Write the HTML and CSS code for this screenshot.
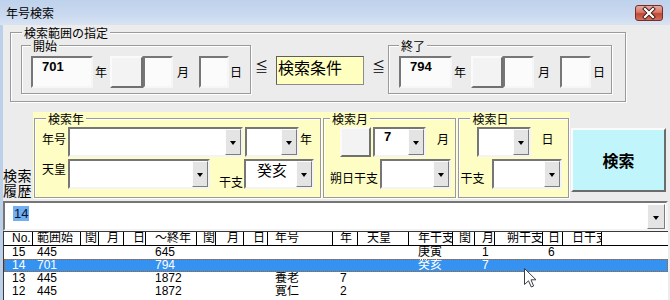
FILE: index.html
```html
<!DOCTYPE html>
<html lang="ja">
<head>
<meta charset="utf-8">
<title>年号検索</title>
<link rel="stylesheet" href="styles.css">
</head>
<body>
<div class="window">
  <div class="titlebar">
    <span class="title">年号検索</span>
    <span class="close"><svg width="28" height="16" viewBox="0 0 28 16"><path d="M10 4 L18 12 M18 4 L10 12" stroke="#3a1a16" stroke-width="4" stroke-linecap="square"/><path d="M10 4 L18 12 M18 4 L10 12" stroke="#fff" stroke-width="2.2" stroke-linecap="square"/></svg></span>
  </div>
  <div class="client">
    <fieldset class="grp range">
      <legend>検索範囲の指定</legend>
      <div class="range-row">
        <fieldset class="grp sub g-start">
          <legend>開始</legend>
          <div class="ctl-row">
            <div class="box sunken yr w62">701</div><span class="lbl l-nen">年</span>
            <div class="box raised w33"></div><div class="box sunken w30"></div><span class="lbl l-tsuki">月</span>
            <div class="box sunken w30"></div><span class="lbl l-hi">日</span>
          </div>
        </fieldset>
        <span class="le le1">≦</span>
        <div class="cond">検索条件</div>
        <span class="le le2">≦</span>
        <fieldset class="grp sub g-end">
          <legend>終了</legend>
          <div class="ctl-row">
            <div class="box sunken yr w53">794</div><span class="lbl l-nen2">年</span>
            <div class="box raised w32"></div><div class="box sunken w31"></div><span class="lbl l-tsuki2">月</span>
            <div class="box sunken w31"></div><span class="lbl l-hi2">日</span>
          </div>
        </fieldset>
      </div>
    </fieldset>

    <div class="search-row">
      <div class="hist-label"><span>検索</span><span>履歴</span></div>
      <div class="yellow">
        <fieldset class="grp ygrp g-year">
          <legend>検索年</legend>
          <div class="frow">
            <span class="lbl flbl">年号</span>
            <div class="combo w175"><span class="cv"></span><span class="dd"></span></div>
            <div class="combo w54 ml2"><span class="cv"></span><span class="dd"></span></div>
            <span class="lbl flbl2">年</span>
          </div>
          <div class="frow r2">
            <span class="lbl flbl fl-tenno">天皇</span>
            <div class="combo w142"><span class="cv"></span><span class="dd"></span></div>
            <span class="lbl lbl-end l-eto">干支</span>
            <div class="combo w70"><span class="cv big">癸亥</span><span class="dd"></span></div>
          </div>
        </fieldset>
        <fieldset class="grp ygrp g-month">
          <legend>検索月</legend>
          <div class="frow">
            <div class="box raised w31 h30 ml10"></div>
            <div class="combo w53 ml2"><span class="cv bold">7</span><span class="dd"></span></div>
            <span class="lbl l-m">月</span>
          </div>
          <div class="frow r2">
            <span class="lbl lbl-end l-saku">朔日干支</span>
            <div class="combo w71"><span class="cv"></span><span class="dd"></span></div>
          </div>
        </fieldset>
        <fieldset class="grp ygrp g-day">
          <legend>検索日</legend>
          <div class="frow">
            <div class="combo w54 ml17"><span class="cv"></span><span class="dd"></span></div>
            <span class="lbl l-d">日</span>
          </div>
          <div class="frow r2">
            <span class="lbl lbl-end l-deto">干支</span>
            <div class="combo w70"><span class="cv"></span><span class="dd"></span></div>
          </div>
        </fieldset>
      </div>
      <button class="search-btn">検索</button>
    </div>

    <div class="combo hist"><span class="cv hv"><span class="sel">14</span></span><span class="dd dd-h"></span></div>

    <div class="list">
      <div class="lv-row lv-head">
        <span>No.</span><span>範囲始</span><span>閏</span><span>月</span><span>日</span><span>～終年</span><span>閏</span><span>月</span><span>日</span><span>年号</span><span>年</span><span>天皇</span><span>年干支</span><span>閏</span><span>月</span><span>朔干支</span><span>日</span><span>日干支</span><span class="last"></span>
      </div>
      <div class="lv-row">
        <span>15</span><span>445</span><span></span><span></span><span></span><span>645</span><span></span><span></span><span></span><span></span><span></span><span></span><span>庚寅</span><span></span><span>1</span><span></span><span>6</span><span></span><span></span>
      </div>
      <div class="lv-row selected">
        <span>14</span><span>701</span><span></span><span></span><span></span><span>794</span><span></span><span></span><span></span><span></span><span></span><span></span><span>癸亥</span><span></span><span>7</span><span></span><span></span><span></span><span></span>
      </div>
      <div class="lv-row">
        <span>13</span><span>445</span><span></span><span></span><span></span><span>1872</span><span></span><span></span><span></span><span>養老</span><span>7</span><span></span><span></span><span></span><span></span><span></span><span></span><span></span><span></span>
      </div>
      <div class="lv-row">
        <span>12</span><span>445</span><span></span><span></span><span></span><span>1872</span><span></span><span></span><span></span><span>寛仁</span><span>2</span><span></span><span></span><span></span><span></span><span></span><span></span><span></span><span></span>
      </div>
    </div>
  </div>
  <svg class="cursor" width="13" height="20" viewBox="0 0 13 20"><path d="M0.5 0.5 L0.5 16.5 L4.5 12.8 L7.3 19 L9.6 18 L7 11.8 L12 11.8 Z" fill="#fff" stroke="#3c3c46" stroke-width="1" stroke-linejoin="round"/></svg>
</div>
</body>
</html>
```

FILE: styles.css
```css
* { box-sizing: border-box; }

body {
  margin: 0;
  width: 670px;
  height: 300px;
  overflow: hidden;
  font-family: "Liberation Sans", "Noto Sans CJK JP", sans-serif;
  font-size: 12px;
  color: #000;
  background: #c5d6ee;
}

.window {
  position: relative;
  width: 670px;
  height: 300px;
  display: flex;
  flex-direction: column;
  background: #bdd0ea;
}

.titlebar {
  height: 25px;
  flex: none;
  display: flex;
  align-items: flex-start;
  background: linear-gradient(#bfd2ec, #c9d9ef 60%, #d9e4f3);
}

.title {
  padding: 6px 0 0 6px;
  line-height: 14px;
  font-family: "Noto Sans CJK JP", sans-serif;
  font-size: 12px;
}

.close {
  margin: 5px 7px 0 auto;
  width: 28px;
  height: 16px;
  border: 1px solid #7a2c24;
  border-radius: 3px;
  background: linear-gradient(#e7aa9f, #d67869 45%, #c04734 55%, #d0705c);
  display: flex;
  align-items: center;
  justify-content: center;
  overflow: hidden;
}
.close svg { display: block; margin: -1px; }

.client {
  flex: 1;
  margin-left: 3px;
  background: #ececec;
  display: flex;
  flex-direction: column;
  overflow: hidden;
}

/* group boxes */
.grp {
  margin: 0;
  min-width: 0;
  border: 1px solid #9a9a9a;
  box-shadow: inset 1px 1px 0 #fff, 1px 1px 0 #fff;
}
.grp > legend {
  padding: 0 2px;
  font-size: 12px;
  line-height: 13px;
  font-family: "Noto Sans CJK JP", sans-serif;
  background: #ececec;
}

.range {
  margin: 1px 0 0 7px;
  width: 616px;
  padding: 0 0 7px 10px;
}
.range > legend { margin-left: 1px; }

.range-row {
  display: flex;
  align-items: flex-start;
}

.sub { padding: 4px 0 5px 9px; }
.g-start { width: 230px; }
.g-end { width: 224px; margin-left: 3px; padding-left: 10px; }

.ctl-row {
  display: flex;
  align-items: center;
}

.lbl {
  font-family: "Noto Sans CJK JP", sans-serif;
  font-size: 12px;
  line-height: 14px;
  white-space: nowrap;
}

/* 3D boxes */
.box { height: 32px; }
.sunken {
  border: 2px solid;
  border-color: #767676 #f6f6f6 #f6f6f6 #767676;
  background: #fbfbfb;
}
.raised {
  border: 2px solid;
  border-color: #fafafa #707070 #707070 #fafafa;
  background: #f3f3f3;
}
.yr {
  font-weight: bold;
  font-size: 13px;
  line-height: 15px;
  padding: 1px 0 0 9px;
}
.w62 { width: 62px; }
.w53 { width: 53px; }
.w33 { width: 33px; }
.w32 { width: 32px; }
.w31 { width: 31px; }
.w30 { width: 30px; }
.h30 { height: 30px; }

.l-nen { margin: 0 3px 0 2px; }
.l-tsuki { margin: 0 10px 0 4px; }
.l-hi { margin-left: 1px; }
.l-nen2 { margin: 0 5px 0 2px; }
.l-tsuki2 { margin: 0 10px 0 4px; }
.l-hi2 { margin-left: 2px; }

.le {
  width: 13px;
  font-family: "Noto Sans CJK JP", sans-serif;
  font-size: 13px;
  line-height: 14px;
  margin-top: 20px;
}
.le1 { margin-left: 4px; }
.le2 { margin-left: 8px; }

.cond {
  margin: 17px 0 0 8px;
  width: 88px;
  height: 29px;
  border: 1px solid;
  border-color: #5e5e5e #8c8c8c #8c8c8c #5e5e5e;
  background: #ffffc0;
  font-family: "Noto Sans CJK JP", sans-serif;
  font-size: 16px;
  line-height: 18px;
  padding: 1px 0 0 1px;
}

/* second row */
.search-row {
  display: flex;
  margin-top: 10px;
  height: 87px;
  flex: none;
}

.hist-label {
  width: 30px;
  align-self: flex-end;
  margin-bottom: 1px;
  display: flex;
  flex-direction: column;
  font-family: "Noto Sans CJK JP", sans-serif;
  font-size: 14px;
  line-height: 15px;
  letter-spacing: 0.5px;
}

.yellow {
  width: 537px;
  display: flex;
  gap: 2px;
  padding: 0 1px 1px 1px;
  background: #fdfdc4;
}

.ygrp > legend { background: #fdfdc4; }
.ygrp { padding: 2px 0 0 0; }

.g-year { width: 288px; padding-left: 7px; }
.g-year > legend { margin-left: 4px; }
.g-month { width: 134px; padding-left: 6px; }
.g-day { width: 111px; padding-left: 1px; }
.g-day > legend { margin-left: 10px; }

.frow {
  display: flex;
  align-items: flex-start;
}
.frow.r2 { margin-top: 2px; }

.flbl { width: 26px; padding-top: 5px; }
.fl-tenno { padding-top: 3px; }
.flbl2 { margin-left: 1px; padding-top: 5px; }
.lbl-end { align-self: flex-end; margin-bottom: 0; }
.l-eto { margin-left: 9px; width: 25px; }
.l-m { margin-left: 11px; padding-top: 5px; }
.l-saku { width: 50px; margin-bottom: 4px; }
.l-d { margin-left: 10px; padding-top: 5px; }
.l-deto { width: 32px; margin-bottom: 4px; }

.ml2 { margin-left: 2px; }
.ml10 { margin-left: 10px; }
.ml17 { margin-left: 17px; }

/* combo boxes */
.combo {
  display: flex;
  height: 30px;
  border: 2px solid;
  border-color: #767676 #f4f4f4 #f4f4f4 #767676;
  background: #fff;
}
.w175 { width: 175px; }
.w142 { width: 142px; }
.w71 { width: 71px; }
.w70 { width: 70px; }
.w54 { width: 54px; }
.w53 { width: 53px; }

.cv {
  flex: 1;
  min-width: 0;
  padding-left: 9px;
  line-height: 15px;
  white-space: nowrap;
}
.cv.bold { font-weight: bold; font-size: 13px; }
.cv.big {
  font-family: "Noto Sans CJK JP", sans-serif;
  font-size: 15px;
  line-height: 17px;
  padding-left: 11px;
}

.dd {
  width: 16px;
  flex: none;
  background: #e4e4e4;
  border: 1px solid;
  border-color: #fdfdfd #7c7c7c #7c7c7c #fdfdfd;
  display: flex;
  align-items: center;
  justify-content: center;
}
.dd::after {
  content: "";
  margin-top: 2px;
  border-left: 3.5px solid transparent;
  border-right: 3.5px solid transparent;
  border-top: 4px solid #000;
}

.search-btn {
  margin: 16px 0 0 1px;
  width: 95px;
  height: 64px;
  padding: 0;
  border: 2px solid;
  border-color: #fbfbfb #6c6c6c #6c6c6c #fbfbfb;
  background: #c0f6fb;
  font-family: "Noto Sans CJK JP", sans-serif;
  font-size: 16px;
  font-weight: bold;
  color: #000;
}

/* history combo */
.combo.hist {
  margin-top: 2px;
  width: 665px;
  height: 30px;
  flex: none;
}
.hv { padding: 3px 0 0 8px; font-size: 13px; }
.sel {
  background: #73aef0;
  color: #00163a;
  padding: 0 1px;
}
.dd-h { width: 18px; margin: 1px 1px 0 0; }

/* list */
.list {
  width: 665px;
  flex: 1;
  background: #fff;
  border-top: 1px solid #3a3a3a;
  border-left: 1px solid #3a3a3a;
  overflow: hidden;
}

.lv-row {
  display: grid;
  grid-template-columns: 29px 48px 18px 25px 22px 51px 19px 28px 24px 65px 25px 51px 44px 22px 20px 48px 20px 39px 1fr;
  height: 13px;
  line-height: 13px;
  font-size: 12px;
}
.lv-row > span {
  overflow: hidden;
  white-space: nowrap;
}
.lv-row > :nth-child(1) { padding-left: 8px; }
.lv-row > :nth-child(2) { padding-left: 4px; }
.lv-row > :nth-child(3) { padding-left: 4px; }
.lv-row > :nth-child(4) { padding-left: 8px; }
.lv-row > :nth-child(5) { padding-left: 9px; }
.lv-row > :nth-child(6) { padding-left: 9px; }
.lv-row > :nth-child(7) { padding-left: 6px; }
.lv-row > :nth-child(8) { padding-left: 11px; }
.lv-row > :nth-child(9) { padding-left: 9px; }
.lv-row > :nth-child(10) { padding-left: 7px; }
.lv-row > :nth-child(11) { padding-left: 7px; }
.lv-row > :nth-child(12) { padding-left: 9px; }
.lv-row > :nth-child(13) { padding-left: 9px; }
.lv-row > :nth-child(14) { padding-left: 6px; }
.lv-row > :nth-child(15) { padding-left: 7px; }
.lv-row > :nth-child(16) { padding-left: 12px; }
.lv-row > :nth-child(17) { padding-left: 5px; }
.lv-row > :nth-child(18) { padding-left: 9px; }

.lv-head {
  height: 14px;
  border-bottom: 1px solid #000;
}
.lv-head > span { border-right: 1px solid #000; }
.lv-head > span.last { border-right: 0; }

.lv-row.selected {
  background: #3592f0;
  color: #fff;
  outline: 1px dotted #c25c00;
  outline-offset: -1px;
}

.cursor {
  position: absolute;
  left: 524px;
  top: 268px;
}
```
